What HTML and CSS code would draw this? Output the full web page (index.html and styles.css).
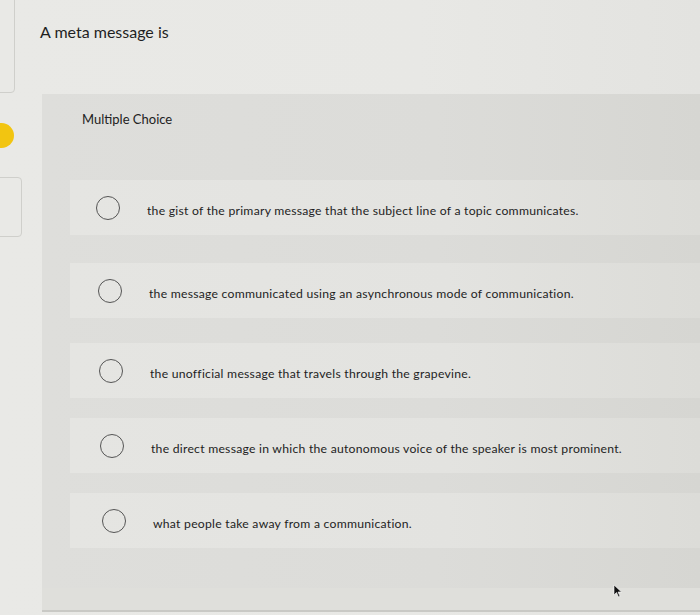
FILE: index.html
```html
<!DOCTYPE html>
<html>
<head>
<meta charset="utf-8">
<link rel="stylesheet" href="styles.css">
</head>
<body>
<div class="page">
  <aside class="side">
    <div class="side-card top"></div>
    <div class="dot"></div>
    <div class="side-card mid"></div>
  </aside>
  <main class="main">
    <h1 class="title">A meta message is</h1>
    <section class="panel">
      <div class="kind">Multiple Choice</div>
      <div class="options">
        <label class="opt"><span class="radio"></span><span class="txt">the gist of the primary message that the subject line of a topic communicates.</span></label>
        <label class="opt"><span class="radio"></span><span class="txt">the message communicated using an asynchronous mode of communication.</span></label>
        <label class="opt"><span class="radio"></span><span class="txt">the unofficial message that travels through the grapevine.</span></label>
        <label class="opt"><span class="radio"></span><span class="txt">the direct message in which the autonomous voice of the speaker is most prominent.</span></label>
        <label class="opt"><span class="radio"></span><span class="txt">what people take away from a communication.</span></label>
      </div>
    </section>
    <div class="footer-band"></div>
  </main>
  <svg class="cursor" width="10" height="14" viewBox="0 0 10 14"><path d="M1 1 L1 11 L3.5 8.5 L5.5 13 L7 12.3 L5 8 L8.5 8 Z" fill="#111" stroke="#fff" stroke-width="0.6"/></svg>
</div>
</body>
</html>
```
FILE: styles.css
```css
html, body {
  margin: 0;
  padding: 0;
}
body {
  background: #e7e7e4;
  font-family: Lato, "Open Sans", sans-serif;
  color: #222;
  width: 700px;
  height: 615px;
  overflow: hidden;
}
.page {
  position: relative;
  display: flex;
  height: 615px;
  background: linear-gradient(90deg, #e9e9e6 0%, #e8e8e5 60%, #e3e3e0 100%);
}
.side {
  width: 22px;
  flex: none;
  display: flex;
  flex-direction: column;
}
.side-card {
  border: 1px solid #cfcfcb;
  border-radius: 4px;
  background: #e9e9e6;
}
.side-card.top {
  width: 23px;
  height: 100px;
  margin-top: -9px;
  margin-left: -10px;
}
.dot {
  width: 25px;
  height: 25px;
  border-radius: 50%;
  background: #f2c511;
  margin-left: -11px;
  margin-top: 30px;
}
.side-card.mid {
  width: 30px;
  height: 58px;
  margin-left: -10px;
  margin-top: 29px;
}
.main {
  flex: 1;
  display: flex;
  flex-direction: column;
  padding-left: 18px;
}
.title {
  margin: 21px 0 0 0;
  font-size: 16px;
  font-weight: 400;
  line-height: 22px;
  color: #1f1f1f;
}
.panel {
  margin-top: 51px;
  margin-left: 2px;
  background: linear-gradient(90deg, #dededb 0%, #dcdcd9 60%, #d6d6d2 100%);
  padding: 16px 0 40px 28px;
}
.kind {
  font-size: 13px;
  line-height: 18px;
  padding-left: 12px;
  color: #222;
}
.options {
  margin-top: 52px;
  display: flex;
  flex-direction: column;
}
.opt {
  display: flex;
  align-items: center;
  height: 55px;
  background: linear-gradient(90deg, #e5e5e2 0%, #e3e3e0 60%, #dcdcd8 100%);
  padding-left: 26px;
}
.opt:nth-child(2) { padding-left: 28px; margin-top: 28px; }
.opt:nth-child(3) { padding-left: 29px; margin-top: 25px; }
.opt:nth-child(4) { padding-left: 30px; margin-top: 20px; }
.opt:nth-child(5) { padding-left: 32px; margin-top: 20px; }
.radio {
  border: 1.5px solid #555;
  border-radius: 50%;
  flex: none;
  box-sizing: border-box;
  width: 24px;
  height: 24px;
}
.txt {
  margin-left: 27px;
  margin-top: 6px;
  font-size: 12.2px;
  color: #1e1e1e;
  letter-spacing: 0.25px;
}
.footer-band {
  height: 22px;
  background: #dfdfdb;
  border-bottom: 2px solid #c9c9c5;
  margin-left: 2px;
}
.cursor {
  position: absolute;
  left: 613px;
  top: 584px;
}
```
